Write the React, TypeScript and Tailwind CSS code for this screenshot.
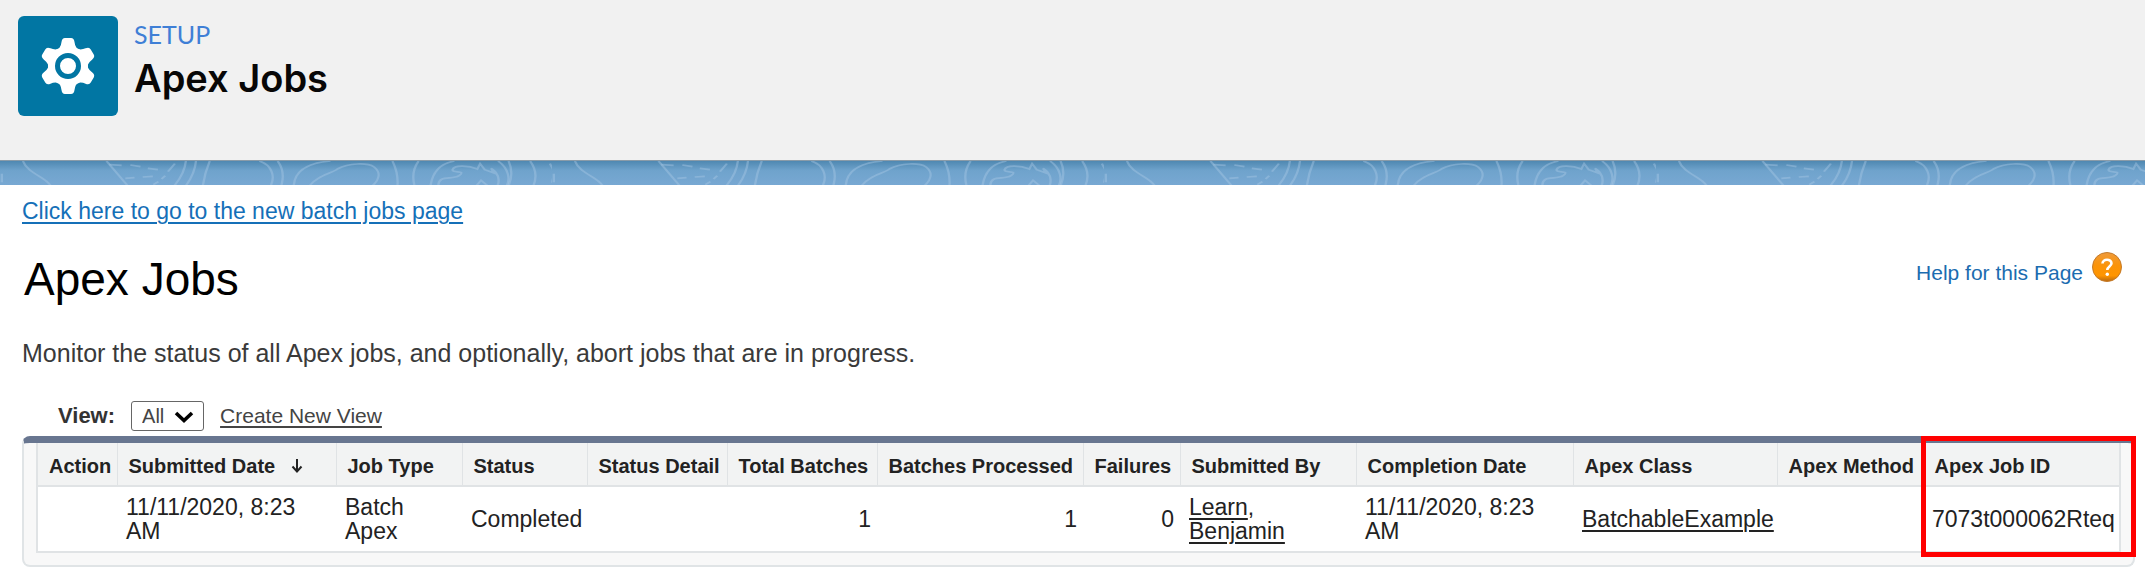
import { ReactNode } from 'react';

const TEETH = [0, 60, 120, 180, 240, 300];

function SetupIcon() {
  return (
    <svg viewBox="-50 -50 100 100" className="size-25 rounded-md bg-[#0176a3]" aria-hidden="true">
      <g fill="#fff">
        <circle r="20" />
        {TEETH.map((angle) => (
          <path
            key={angle}
            transform={`rotate(${angle})`}
            d="M-13 -14 Q-7 -18 -6.5 -24 Q-6 -28 -3 -28 H3 Q6 -28 6.5 -24 Q7 -18 13 -14 Z"
          />
        ))}
      </g>
      <circle r="10.5" fill="none" stroke="#0176a3" strokeWidth="5" />
    </svg>
  );
}

function HelpIcon() {
  return (
    <svg viewBox="0 0 32 32" className="size-8" aria-hidden="true">
      <defs>
        <linearGradient id="orb" x1="0" y1="0" x2="0" y2="1">
          <stop offset="0" stopColor="#ef9a3a" />
          <stop offset="0.45" stopColor="#fb9409" />
          <stop offset="0.8" stopColor="#ff9500" />
          <stop offset="1" stopColor="#b9680f" />
        </linearGradient>
      </defs>
      <circle cx="16" cy="16" r="14.5" fill="url(#orb)" stroke="#c47a2a" />
      <path d="M11.5 12.5 C11.5 7.5 20.5 7.5 20.5 12.3 C20.5 15.5 16.3 15.5 16.3 19" fill="none" stroke="#fff" strokeWidth="2.6" />
      <circle cx="16.3" cy="23.3" r="1.7" fill="#fff" />
    </svg>
  );
}

const CONTOURS = [
  'M50 30 C60 68 100 78 110 104',
  'M232 30 L278 104',
  'M405 30 Q402 68 380 104',
  'M427 30 Q424 70 405 104',
  'M457 30 Q446 66 442 104',
  'M565 30 C592 42 600 75 590 104',
  'M605 30 Q622 62 613 104',
  'M640 104 C642 60 668 36 720 30',
  'M675 104 C690 75 722 68 735 54 C760 36 800 34 815 48 C832 66 824 88 812 104',
  'M855 30 Q868 66 866 104',
  'M912 30 Q895 62 903 104',
  'M938 104 C942 66 958 38 990 30',
  'M955 104 C955 70 985 88 1000 74 C1018 56 984 68 986 56 C990 40 1022 44 1040 54 L1046 38 L1056 56 L1076 66 L1070 52 C1084 64 1090 84 1084 104',
  'M1038 104 L1048 88 L1062 104',
  'M1085 30 C1108 52 1112 84 1104 104',
  'M1108 30 Q1120 66 1108 104',
  'M1155 30 Q1174 66 1162 104',
  'M238 41 L265 43 M284 42 L306 47 M322 52 L344 56 M273 82 L293 80 M311 78 L333 76',
  'M381 38 L366 62 M360 74 L352 84 M345 92 L334 101',
  'M1198 38 L1205 55 M1207 68 L1203 95 M4 68 L4 94',
];

function ContourBand() {
  return (
    <div className="h-[25px] border-t border-[#8a9ba8] bg-linear-to-b from-[#4f88b1] via-[#6fa3cc] via-40% to-[#78a8d3]">
      <svg className="block h-6 w-full" aria-hidden="true">
        <defs>
          <pattern id="contours" width="552" height="24" patternUnits="userSpaceOnUse">
            <g transform="scale(0.459 0.333) translate(0 -30)" fill="none" stroke="#a9c9e4" strokeOpacity="0.42" strokeWidth="5">
              {CONTOURS.map((d) => (
                <path key={d} d={d} />
              ))}
            </g>
          </pattern>
        </defs>
        <rect width="100%" height="24" fill="url(#contours)" />
      </svg>
    </div>
  );
}

function Th({ children }: { children: ReactNode }) {
  return (
    <th scope="col" className="h-[43px] border-l border-r border-b-2 border-[#e0e3e5] bg-[#f2f3f3] pt-1 pl-[11px] text-left text-[20px] leading-6 font-bold whitespace-nowrap">
      {children}
    </th>
  );
}

function Td({ children, right = false }: { children?: ReactNode; right?: boolean }) {
  return (
    <td className={right ? 'h-[66px] pr-1.5 text-right' : 'h-[66px] pr-1 pl-[9px]'}>{children}</td>
  );
}

export default function App() {
  return (
    <div className="bg-white font-['Liberation_Sans',Arial,sans-serif] text-[#222]">
      <header className="flex h-[160px] items-start gap-4 bg-[#f1f1f1] pt-4 pl-[18px]">
        <SetupIcon />
        <div className="flex flex-col pt-0.5">
          <p className="font-[Lato,sans-serif] text-[25px] leading-8 text-[#3f7fd6]">SETUP</p>
          <h1 className="pt-1 font-[Inter,sans-serif] text-[38px] leading-12 font-semibold text-[#080707]">
            Apex Jobs
          </h1>
        </div>
      </header>
      <ContourBand />

      <main className="pr-[10px] pl-[22px]">
        <p className="pt-3 text-[23px] leading-7">
          <a href="#batch-jobs" className="text-[#1570b8] underline decoration-2 underline-offset-3">
            Click here to go to the new batch jobs page
          </a>
        </p>

        <div className="flex items-start justify-between pt-6">
          <h2 className="pl-0.5 text-[46px] leading-[60px] text-black">Apex Jobs</h2>
          <a href="#help" className="flex gap-2 pr-3 text-[21px] leading-6 text-[#1b6cb0]">
            <span className="pt-3">Help for this Page</span>
            <span className="pt-0.5">
              <HelpIcon />
            </span>
          </a>
        </div>

        <p className="pt-7 text-[25px] leading-8 text-[#3a3a3a]">
          Monitor the status of all Apex jobs, and optionally, abort jobs that are in progress.
        </p>

        <div className="flex items-center pt-8 pl-9">
          <label htmlFor="view" className="text-[22px] leading-6 font-bold text-[#333]">
            View:
          </label>
          <span className="relative ml-4 flex">
            <select
              id="view"
              className="h-[30px] w-[73px] appearance-none rounded-[3px] border border-[#666] bg-white pl-2.5 text-[20px] leading-7 text-[#444]"
            >
              <option>All</option>
            </select>
            <svg viewBox="0 0 20 12" className="pointer-events-none absolute top-2.5 right-2.5 h-3 w-5" aria-hidden="true">
              <path d="M2 2 L10 9.5 L18 2" fill="none" stroke="#000" strokeWidth="3.6" />
            </svg>
          </span>
          <a href="#create-view" className="ml-4 text-[21px] leading-6 text-[#444] underline decoration-2 underline-offset-3">
            Create New View
          </a>
        </div>

        <div className="relative mt-[5px] rounded-lg border-x-2 border-t-[7px] border-b-2 border-[#e0e4e6] border-t-[#687690] bg-[#f8f8f8] px-3 pb-3">
          <table className="w-full table-fixed border-collapse border-2 border-t-0 border-[#e0e3e5] bg-white text-[23px] leading-6">
            <colgroup>
              <col className="w-[80px]" />
              <col className="w-[219px]" />
              <col className="w-[126px]" />
              <col className="w-[125px]" />
              <col className="w-[140px]" />
              <col className="w-[150px]" />
              <col className="w-[206px]" />
              <col className="w-[97px]" />
              <col className="w-[176px]" />
              <col className="w-[217px]" />
              <col className="w-[204px]" />
              <col className="w-[146px]" />
              <col className="w-[197px]" />
            </colgroup>
            <thead>
              <tr>
                <Th>Action</Th>
                <Th>
                  <span className="flex items-center gap-4">
                    Submitted Date
                    <svg viewBox="0 0 12 16" className="h-4 w-3" aria-label="Sorted descending" role="img">
                      <path d="M6 1 V13 M1.5 8.5 L6 13.5 L10.5 8.5" fill="none" stroke="#222" strokeWidth="2" />
                    </svg>
                  </span>
                </Th>
                <Th>Job Type</Th>
                <Th>Status</Th>
                <Th>Status Detail</Th>
                <Th>Total Batches</Th>
                <Th>Batches Processed</Th>
                <Th>Failures</Th>
                <Th>Submitted By</Th>
                <Th>Completion Date</Th>
                <Th>Apex Class</Th>
                <Th>Apex Method</Th>
                <Th>Apex Job ID</Th>
              </tr>
            </thead>
            <tbody>
              <tr>
                <Td />
                <Td>11/11/2020, 8:23 AM</Td>
                <Td>Batch Apex</Td>
                <Td>Completed</Td>
                <Td />
                <Td right>1</Td>
                <Td right>1</Td>
                <Td right>0</Td>
                <Td>
                  <a href="#user">
                    <span className="underline decoration-2 underline-offset-3">Learn</span>,
                    <br />
                    <span className="underline decoration-2 underline-offset-3">Benjamin</span>
                  </a>
                </Td>
                <Td>11/11/2020, 8:23 AM</Td>
                <Td>
                  <a href="#class" className="underline decoration-2 underline-offset-3">
                    BatchableExample
                  </a>
                </Td>
                <Td />
                <Td>7073t000062Rteq</Td>
              </tr>
            </tbody>
          </table>
          <div className="pointer-events-none absolute -top-[7px] -right-[3px] bottom-2 w-[215px] border-5 border-[#ff0000]" />
        </div>
      </main>
    </div>
  );
}
